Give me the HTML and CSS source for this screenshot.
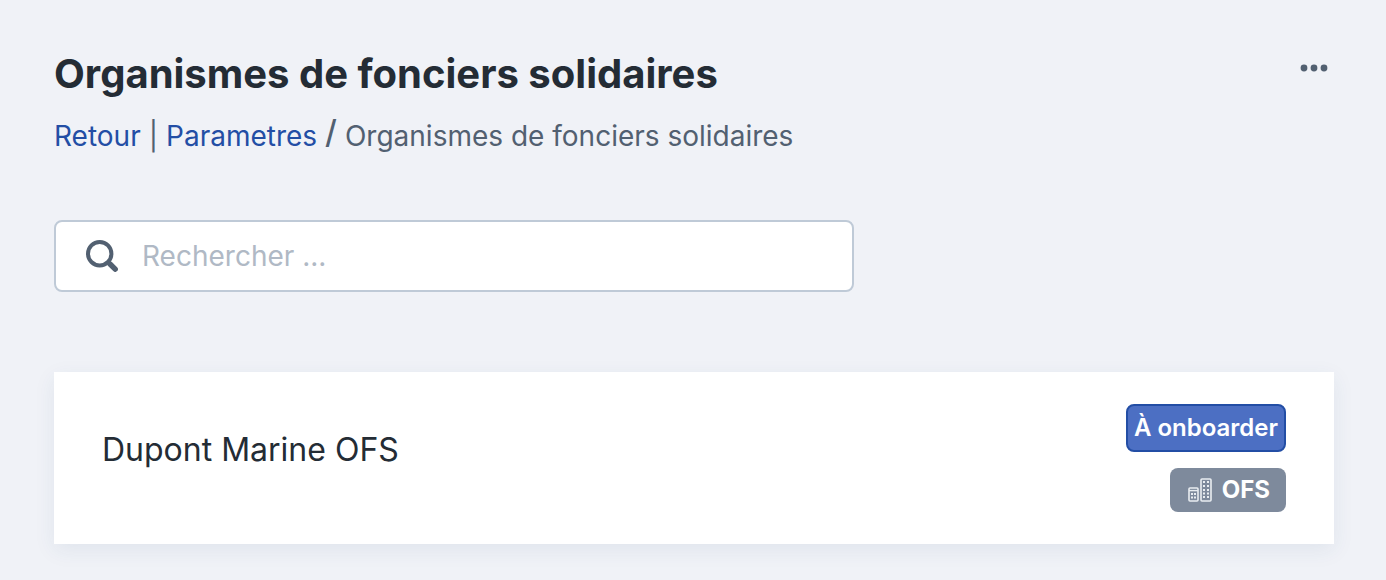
FILE: index.html
```html
<!DOCTYPE html>
<html lang="fr">
<head>
<meta charset="UTF-8">
<meta name="viewport" content="width=device-width, initial-scale=1.0">
<title>Organismes de fonciers solidaires</title>
<link rel="stylesheet" href="styles.css">
</head>
<body>
<main class="page">
    <header class="page-header">
        <div>
            <h1 class="title">Organismes de fonciers solidaires</h1>
            <nav class="breadcrumb" aria-label="Navigation">
                <a href="#">Retour</a>
                <span>|</span>
                <a href="#">Parametres</a>
                <span class="slash">/</span>
                <span>Organismes de fonciers solidaires</span>
            </nav>
        </div>
        <button class="menu-button" type="button" aria-label="Actions">
            <svg width="28" height="8" viewBox="0 0 28 8" fill="currentColor">
                <circle cx="4" cy="4" r="3.4"/>
                <circle cx="14" cy="4" r="3.4"/>
                <circle cx="24" cy="4" r="3.4"/>
            </svg>
        </button>
    </header>

    <form class="search">
        <label class="search-icon" for="search" aria-label="Rechercher">
            <svg width="32" height="32" viewBox="0 0 32 32" fill="none" stroke="currentColor">
                <circle cx="13.7" cy="13.7" r="11.7" stroke-width="4"/>
                <path d="M22 22l1.5 1.5" stroke-width="4"/>
                <path d="M24 24l5.2 5.2" stroke-width="5.4" stroke-linecap="round"/>
            </svg>
        </label>
        <input class="search-input" type="text" id="search" placeholder="Rechercher ...">
    </form>

    <section class="card">
        <div class="card-name">Dupont Marine OFS</div>
        <div class="badges">
            <span class="badge badge-primary">À onboarder</span>
            <span class="badge badge-grey">
                <svg width="24" height="24" viewBox="0 0 24 24" fill="none" stroke="#e9edf1">
                    <rect x="1" y="10" width="9" height="13" rx="1" stroke-width="1.6"/>
                    <path d="M1 12.6h9" stroke-width="1.4"/>
                    <path d="M3 16h2M6 16h2M3 19.5h2M6 19.5h2" stroke-width="2"/>
                    <rect x="13" y="1" width="10" height="22" rx="1" stroke-width="1.6"/>
                    <path d="M15 4h2M19 4h2M15 8h2M19 8h2M15 12h2M19 12h2M15 15.5h2M19 15.5h2M15 19h2M19 19h2" stroke-width="2"/>
                </svg>
                OFS
            </span>
        </div>
    </section>
</main>
</body>
</html>
```

FILE: styles.css
```css
body {
    margin: 0;
    font-family: Inter, sans-serif;
    font-size: 28px;
    color: #242c35;
    background-color: #f0f2f7;
}
.page {
    padding: 50px 52px 36px 54px;
}
.page-header {
    display: flex;
    justify-content: space-between;
    align-items: flex-start;
}
.title {
    margin: 0;
    font-size: 40px;
    line-height: 48px;
    font-weight: 700;
}
.breadcrumb {
    display: flex;
    gap: 8px;
    margin-top: 20px;
    line-height: 36px;
    color: #526071;
}
.breadcrumb a {
    color: #234ea5;
    text-decoration: none;
}
.slash {
    font-size: 32px;
    line-height: 28px;
    font-weight: 500;
}
.menu-button {
    display: flex;
    padding: 14px 6px;
    border: none;
    background: none;
    color: #526071;
    cursor: pointer;
}
.search {
    display: flex;
    align-items: center;
    gap: 24px;
    box-sizing: border-box;
    max-width: 800px;
    height: 72px;
    margin: 66px 0 80px;
    padding: 0 30px;
    border: 2px solid #bfcad7;
    border-radius: 8px;
    background-color: #fff;
}
.search-icon {
    display: flex;
    color: #526071;
}
.search-input {
    flex: 1;
    min-width: 0;
    padding: 0;
    border: none;
    outline: none;
    font: inherit;
    color: inherit;
    background: none;
}
.search-input::placeholder {
    color: #b0b9c5;
}
.card {
    display: flex;
    justify-content: space-between;
    padding: 32px 48px;
    background-color: #fff;
    box-shadow: 0 6px 20px rgba(35, 78, 115, 0.08);
}
.card-name {
    padding-top: 26px;
    font-size: 32px;
    line-height: 40px;
}
.badges {
    display: flex;
    flex-direction: column;
    align-items: flex-end;
    gap: 16px;
}
.badge {
    display: flex;
    align-items: center;
    gap: 10px;
    border-radius: 8px;
    font-size: 24px;
    line-height: 44px;
    font-weight: 700;
    color: #fff;
}
.badge-primary {
    padding: 0 6px;
    border: 2px solid #234ea5;
    background-color: #4c6fc3;
    font-weight: 600;
}
.badge-grey {
    padding: 0 16px 0 18px;
    background-color: #7e8a9c;
}
```
